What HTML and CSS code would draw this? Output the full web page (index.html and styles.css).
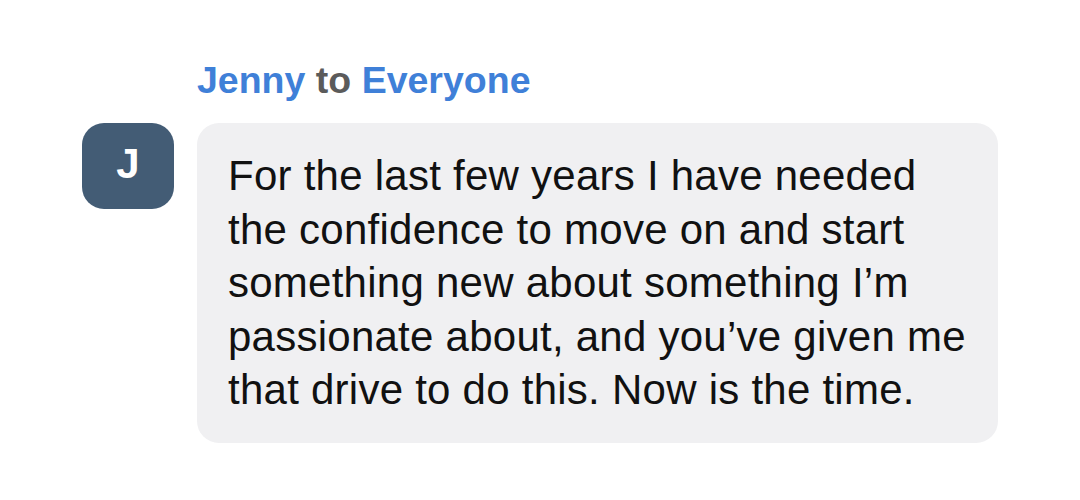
FILE: index.html
```html
<!DOCTYPE html>
<html>
<head>
<meta charset="utf-8">
<link rel="stylesheet" href="styles.css">
</head>
<body>
<div class="message">
  <div class="sender"><span class="name">Jenny</span> <span class="to">to</span> <span class="name">Everyone</span></div>
  <div class="row">
    <div class="avatar">J</div>
    <div class="bubble">For the last few years I have needed the confidence to move on and start something new about something I’m passionate about, and you’ve given me that drive to do this. Now is the time.</div>
  </div>
</div>
</body>
</html>
```

FILE: styles.css
```css
html, body {
  margin: 0;
  padding: 0;
  background: #ffffff;
}
body {
  font-family: "Liberation Sans", Arial, sans-serif;
}
.message {
  padding: 58px 0 0 82px;
}
.sender {
  margin-left: 115px;
  font-size: 37.5px;
  font-weight: bold;
  line-height: 44px;
  margin-bottom: 21px;
}
.name { color: #3f80d8; }
.to { color: #5b5b5b; }
.row {
  display: flex;
  align-items: flex-start;
  gap: 23px;
}
.avatar {
  width: 92px;
  height: 86px;
  border-radius: 22px;
  background: #435c75;
  color: #ffffff;
  font-weight: bold;
  font-size: 42px;
  display: flex;
  align-items: center;
  justify-content: center;
  padding-bottom: 4px;
  box-sizing: border-box;
}
.bubble {
  box-sizing: border-box;
  width: 801px;
  background: #f0f0f2;
  border-radius: 22px;
  padding: 26px 18px 26px 31px;
  color: #111111;
  font-size: 42px;
  line-height: 53.5px;
  letter-spacing: 0.25px;
}
```
